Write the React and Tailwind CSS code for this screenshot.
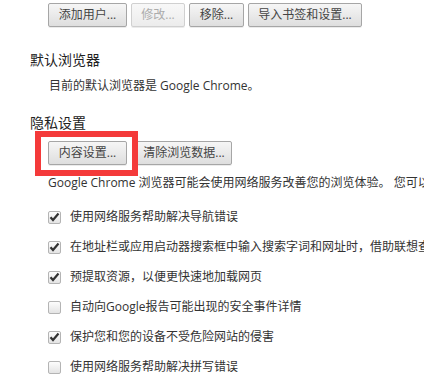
import React from "react";

const font = { fontFamily: '"Open Sans", "Noto Sans CJK SC", sans-serif' };

function Button({ children, disabled, className = "" }) {
  return (
    <button
      disabled={disabled}
      className={
        "h-[24px] px-0 whitespace-nowrap flex items-center justify-center rounded-[2px] border text-[12px] leading-none shadow-[0_1px_0_rgba(0,0,0,0.08)] bg-gradient-to-b " +
        (disabled ? "border-[#d0d0d0] text-[#acacac] from-[#f8f8f8] to-[#ececec] " : "border-[#a6a6a6] text-[#444] from-[#f6f6f6] to-[#dedede] ") +
        className
      }
    >
      {children}
    </button>
  );
}

function Checkbox({ checked }) {
  return (
    <span className="w-[13px] h-[13px] shrink-0 rounded-[2px] border border-[#b4b4b4] bg-gradient-to-b from-[#fdfdfd] to-[#e4e4e4] flex items-center justify-center">
      {checked && (
        <svg width="11" height="10" viewBox="0 0 11 10">
          <path d="M1.5 5.2 L4 8 L9.5 1.5" fill="none" stroke="#333" strokeWidth="2.2" strokeLinejoin="miter" />
        </svg>
      )}
    </span>
  );
}

const options = [
  { checked: true, label: "使用网络服务帮助解决导航错误" },
  { checked: true, label: "在地址栏或应用启动器搜索框中输入搜索字词和网址时，借助联想查询服务显示相关查询及热门网站" },
  { checked: true, label: "预提取资源，以便更快速地加载网页" },
  { checked: false, label: "自动向Google报告可能出现的安全事件详情" },
  { checked: true, label: "保护您和您的设备不受危险网站的侵害" },
  { checked: false, label: "使用网络服务帮助解决拼写错误" },
];

export default function App() {
  return (
    <div style={font} className="w-[424px] h-[382px] overflow-hidden bg-white text-[#303030]">
      <div className="pl-[48px] pt-[3px] flex gap-[4px]">
        <Button className="w-[79px]">添加用户...</Button>
        <Button disabled className="w-[54px]">修改...</Button>
        <Button className="w-[55px]">移除...</Button>
        <Button className="w-[114px]">导入书签和设置...</Button>
      </div>

      <div className="pl-[30px] mt-[23px] text-[14px] leading-[20px] text-[#222]">默认浏览器</div>
      <div className="pl-[49px] mt-[6px] text-[12px] leading-[20px] text-[#333]">目前的默认浏览器是 Google Chrome。</div>

      <div className="pl-[30px] mt-[17px] text-[14px] leading-[20px] text-[#222]">隐私设置</div>
      <div className="pl-[48px] mt-[8px] flex gap-[9px]">
        <div className="relative">
          <Button className="w-[79px]">内容设置...</Button>
          <span className="absolute -left-[13px] -right-[11px] -top-[10px] -bottom-[11px] border-[6px] border-[#f43a3a]"></span>
        </div>
        <Button className="w-[96px]">清除浏览数据...</Button>
      </div>
      <div className="pl-[48px] mt-[8px] text-[12px] leading-[20px] text-[#333] whitespace-nowrap">
        Google Chrome 浏览器可能会使用网络服务改善您的浏览体验。 您可以停用这些服务。
      </div>

      <div className="mt-[9px]">
        {options.map((o, i) => (
          <div key={i} className="h-[30px] pl-[48px] flex items-center gap-[9px] text-[12px] text-[#333] whitespace-nowrap">
            <Checkbox checked={o.checked} />
            <span>{o.label}</span>
          </div>
        ))}
      </div>
    </div>
  );
}
